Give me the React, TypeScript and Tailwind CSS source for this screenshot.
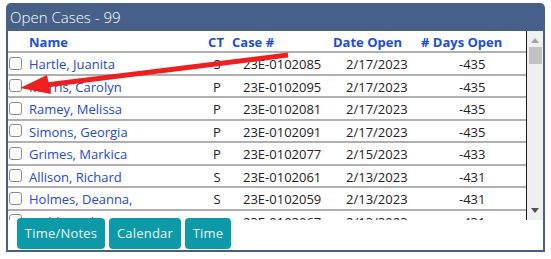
import React from "react";

type Row = { name: string; ct: string; caseNo: string; date: string; days: string };

const rows: Row[] = [
  { name: "Hartle, Juanita", ct: "S", caseNo: "23E-0102085", date: "2/17/2023", days: "-435" },
  { name: "Morris, Carolyn", ct: "P", caseNo: "23E-0102095", date: "2/17/2023", days: "-435" },
  { name: "Ramey, Melissa", ct: "P", caseNo: "23E-0102081", date: "2/17/2023", days: "-435" },
  { name: "Simons, Georgia", ct: "P", caseNo: "23E-0102091", date: "2/17/2023", days: "-435" },
  { name: "Grimes, Markica", ct: "P", caseNo: "23E-0102077", date: "2/15/2023", days: "-433" },
  { name: "Allison, Richard", ct: "S", caseNo: "23E-0102061", date: "2/13/2023", days: "-431" },
  { name: "Holmes, Deanna,", ct: "S", caseNo: "23E-0102059", date: "2/13/2023", days: "-431" },
  { name: "Webb, Katherine", ct: "S", caseNo: "23E-0102067", date: "2/13/2023", days: "-431" },
];

function Checkbox() {
  return <div className="ml-[1px] w-[13px] h-[13px] rounded-[3px] border border-[#8c8c8c] bg-white" />;
}

export default function App() {
  return (
    <div
      className="relative w-[551px] h-[259px] bg-white overflow-hidden"
      style={{ fontFamily: '"Open Sans", "Noto Sans", sans-serif' }}
    >
      <div className="ml-[6px] mt-[3px] w-[539px] h-[249px] flex flex-col rounded-t-[5px] bg-[#466089] border-x-2 border-b-2 border-[#466089]">
        <div className="h-[28px] flex items-center pl-[2px] pt-[1px] text-white text-[15px] font-light leading-none">
          Open Cases - 99
        </div>
        <div className="flex-1 bg-white flex flex-col">
          <div className="flex h-[189px]">
            <div className="flex-1 overflow-hidden">
              <div className="flex h-[22px] border-b-2 border-[#b0b0b0] items-center pt-[3px] text-[13px] font-bold text-[#1c4ddb] leading-none">
                <div className="w-[19px]" />
                <div className="w-[173px] pl-[2px]">Name</div>
                <div className="w-[32px] text-center">CT</div>
                <div className="w-[98px]">Case #</div>
                <div className="w-[88px] pl-[3px]">Date Open</div>
                <div className="w-[108px] pl-[3px]">&#35; Days Open</div>
              </div>
              {rows.map((r) => (
                <div
                  key={r.caseNo}
                  className="flex h-[22.5px] border-b-2 border-[#b0b0b0] items-center text-[13px] leading-none text-[#222222]"
                >
                  <div className="w-[19px] flex items-center">
                    <Checkbox />
                  </div>
                  <div className="w-[173px] pl-[2px] pt-[3px] text-[#2448d6]">{r.name}</div>
                  <div className="w-[32px] text-center pl-[2px] pt-[3px]">{r.ct}</div>
                  <div className="w-[98px] pl-[11px] pt-[3px]">{r.caseNo}</div>
                  <div className="w-[88px] pl-[16px] pt-[3px]">{r.date}</div>
                  <div className="w-[108px] pl-[41px] pt-[3px]">{r.days}</div>
                </div>
              ))}
            </div>
            <div className="w-[17px] border-l border-[#1a1a1a] bg-[#f0f0f0] flex flex-col items-center">
              <svg width="8" height="5" viewBox="0 0 8 5" className="mt-[7px]">
                <polygon points="4,0 8,5 0,5" fill="#a3a3a3" />
              </svg>
              <div className="mt-[4px] w-[13px] h-[17px] bg-[#c1c1c1]" />
              <div className="flex-1" />
              <svg width="8" height="5" viewBox="0 0 8 5" className="mb-[7px]">
                <polygon points="0,0 8,0 4,5" fill="#505050" />
              </svg>
            </div>
          </div>
          <div className="relative -mt-[2px] flex gap-[4px] pl-[9px] text-[13px] text-[#eaf6f6] tracking-[0.2px]">
            <button className="h-[31px] w-[88px] rounded-[4px] bg-[#0d9aa8] flex items-center justify-center">
              Time/Notes
            </button>
            <button className="h-[31px] w-[72px] rounded-[4px] bg-[#0d9aa8] flex items-center justify-center">
              Calendar
            </button>
            <button className="h-[31px] w-[46px] rounded-[4px] bg-[#0d9aa8] flex items-center justify-center">
              Time
            </button>
          </div>
        </div>
      </div>
      <svg className="absolute left-0 top-0 pointer-events-none" width="551" height="259" viewBox="0 0 551 259">
        <line x1="288" y1="55" x2="46" y2="85" stroke="#ee1f1f" strokeWidth="5" />
        <polygon points="20,88 51,94 47,75" fill="#ee1f1f" />
      </svg>
    </div>
  );
}
